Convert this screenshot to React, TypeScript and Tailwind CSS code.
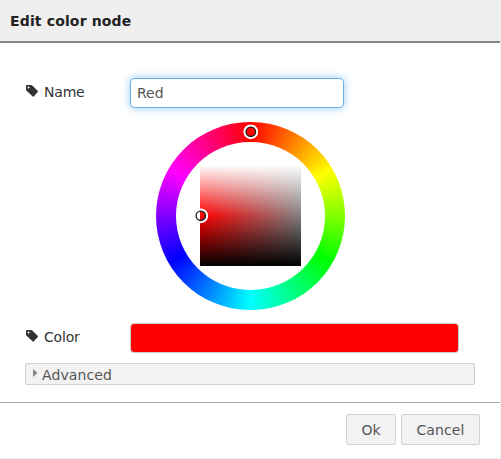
import React from "react";

function TagIcon() {
  return (
    <svg width="13" height="13" viewBox="0 0 13 13" className="mb-[2px] block shrink-0" aria-hidden="true">
      <path
        fillRule="evenodd"
        fill="#333"
        d="M0 1Q0 0 1 0H5Q5.8 0 6.3.5L11.8 6Q12.2 6.5 11.8 7L7.7 11.5Q7.2 12 6.7 11.5L.6 5.7Q0 5.1 0 4.4ZM2.5 1.4A1 1 0 1 0 2.5 3.4A1 1 0 1 0 2.5 1.4Z"
      />
    </svg>
  );
}

function Marker({ className }: { className: string }) {
  return (
    <svg width="16" height="16" viewBox="0 0 16 16" className={`absolute ${className}`} aria-hidden="true">
      <circle cx="7.8" cy="7.8" r="6.2" fill="none" stroke="#fff" strokeWidth="2.3" />
      <circle cx="7.8" cy="7.8" r="4.7" fill="none" stroke="#222" strokeWidth="1.4" />
    </svg>
  );
}

function Label({ children }: { children: React.ReactNode }) {
  return (
    <label className="mb-[2px] flex w-[105px] items-center gap-[5px] pl-px text-[#333]">
      <TagIcon />
      <span className="tracking-[-0.2px]">{children}</span>
    </label>
  );
}

function ColorWheel() {
  return (
    <div className="relative ml-[156px] mt-[14px] flex h-[188px] w-[189px] items-center justify-center rounded-full bg-[conic-gradient(#f00,#ff0,#0f0,#0ff,#00f,#f0f,#f00)]">
      <div className="h-[148px] w-[149px] rounded-full bg-white pl-[24px] pt-[23px]">
        <div className="h-[101px] w-[101px] bg-[linear-gradient(to_bottom,#fff,#fff0_50%,#0000_50%,#000),linear-gradient(to_right,#f00,#808080)]" />
      </div>
      <Marker className="left-[87px] top-[2px]" />
      <Marker className="left-[37px] top-[86px]" />
    </div>
  );
}

export default function App() {
  return (
    <div className="flex h-[459px] w-[501px] flex-col border-b border-r border-[#eee] bg-white font-['DejaVu_Sans',sans-serif] text-[14px] leading-5">
      <header className="flex h-[43px] shrink-0 items-center border-b-2 border-[#888] bg-[#efefef] pl-[10px] font-bold tracking-[0.15px] text-[#222]">
        Edit color node
      </header>
      <main className="h-[359px] shrink-0 pt-[35px]">
        <div className="flex h-[30px] items-center pl-[25px]">
          <Label>Name</Label>
          <input
            defaultValue="Red"
            className="h-[30px] w-[214px] rounded-[4px] border border-[#66afe9] px-[6px] text-[#555] shadow-[0_0_8px_rgba(82,168,236,0.6)] outline-none"
          />
        </div>
        <ColorWheel />
        <div className="mt-[13px] flex h-[30px] items-center pl-[25px]">
          <Label>Color</Label>
          <div className="h-[30px] w-[329px] rounded-[4px] border border-[#ccc] bg-[#f00]" />
        </div>
        <div className="ml-[25px] mt-[10px] flex h-[22px] w-[450px] items-center rounded-[2px] border border-[#d0d0d0] bg-[#f2f2f2] pl-[7px] text-[#555]">
          <svg width="5" height="8" viewBox="0 0 5 8" className="mb-[3px] mr-1" aria-hidden="true">
            <path d="M0 0L4.5 4L0 8Z" fill="#888" />
          </svg>
          <span className="pt-px tracking-[0.1px]">Advanced</span>
        </div>
      </main>
      <footer className="flex grow items-start justify-end gap-[5px] border-t border-[#aaa] pr-5 pt-[11px] text-[#555]">
        <button className="h-[31px] w-[50px] rounded-[2px] border border-[#d0d0d0] bg-[#f2f2f2]">Ok</button>
        <button className="h-[31px] w-[79px] rounded-[2px] border border-[#d0d0d0] bg-[#f2f2f2] tracking-[0.1px]">Cancel</button>
      </footer>
    </div>
  );
}
